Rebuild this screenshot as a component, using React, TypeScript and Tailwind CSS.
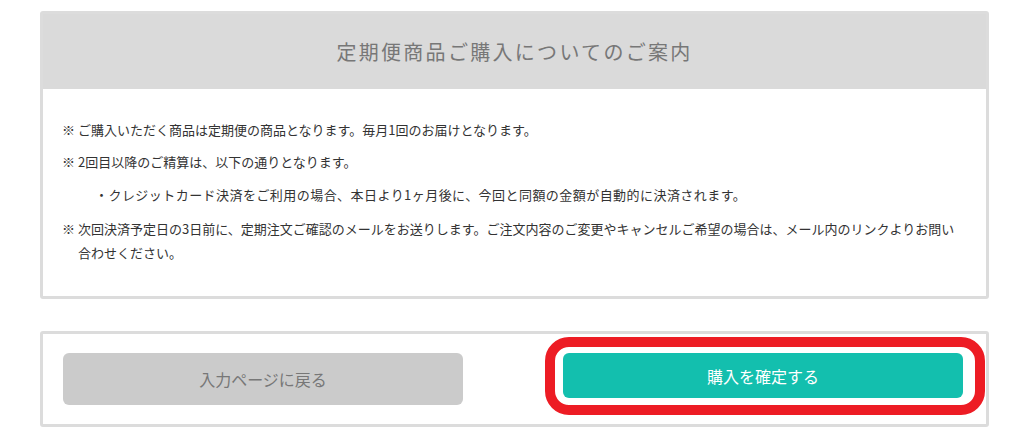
import React from "react";

const FONT = "font-['Noto_Sans_CJK_JP','Noto_Sans',sans-serif]";

export default function App() {
  return (
    <div className={`min-h-screen bg-white pt-[11px] ${FONT}`}>
      <div className="ml-[40px] w-[949px]">
        {/* guidance panel */}
        <section className="overflow-hidden rounded-[3px] border-[3px] border-[#dcdcdc]">
          <header className="flex h-[75px] items-center justify-center bg-[#dadada]">
            <h2 className="text-[20px] leading-none tracking-[2.3px] text-[#777777]">
              定期便商品ご購入についてのご案内
            </h2>
          </header>
          <div className="pl-[19px] pr-[24px] pt-[29px] pb-[31px] text-[13px] leading-[24px] text-[#333333]">
            <p className="pl-[16px] -indent-[16px]">
              ※ ご購入いただく商品は定期便の商品となります。毎月1回のお届けとなります。
            </p>
            <p className="mt-[8px] pl-[16px] -indent-[16px]">
              ※ 2回目以降のご精算は、以下の通りとなります。
            </p>
            <p className="mt-[9px] pl-[33px] tracking-[0.45px]">
              ・クレジットカード決済をご利用の場合、本日より1ヶ月後に、今回と同額の金額が自動的に決済されます。
            </p>
            <p className="mt-[10px] pl-[16px] -indent-[16px]">
              ※ 次回決済予定日の3日前に、定期注文ご確認のメールをお送りします。ご注文内容のご変更やキャンセルご希望の場合は、メール内のリンクよりお問い合わせください。
            </p>
          </div>
        </section>

        {/* actions */}
        <section className="mt-[32px] flex h-[96px] items-start justify-between rounded-[3px] border-[3px] border-[#dcdcdc] pl-[20px] pr-[23px] pt-[19px]">
          <button className="flex h-[52px] w-[400px] items-center justify-center rounded-[6px] bg-[#cbcbcb] text-[16px] text-[#777777]">
            入力ページに戻る
          </button>
          <div className="relative">
            <button className="flex h-[45px] w-[400px] items-center justify-center rounded-[6px] bg-[#13bfae] text-[16px] text-white">
              購入を確定する
            </button>
            <div className="pointer-events-none absolute -top-[16px] -bottom-[17px] -left-[18px] -right-[22px] rounded-[24px] border-[10px] border-[#ed1c24]" />
          </div>
        </section>
      </div>
    </div>
  );
}
